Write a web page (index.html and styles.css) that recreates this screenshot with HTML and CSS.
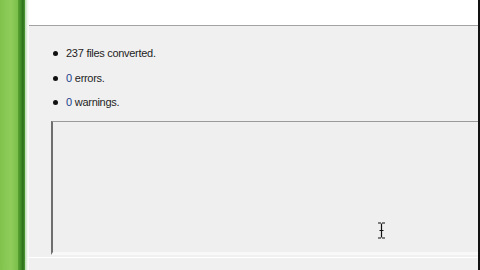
FILE: index.html
```html
<!DOCTYPE html>
<html>
<head>
<meta charset="utf-8">
<link rel="stylesheet" href="styles.css">
</head>
<body>
<div class="screen">
  <div class="desktop">
    <div class="glow"></div>
    <div class="edge-dark"></div>
    <div class="edge-light"></div>
  </div>
  <div class="window">
    <div class="header"></div>
    <div class="content">
      <ul class="results">
        <li><span class="num black">237</span> files converted.</li>
        <li><span class="num">0</span> errors.</li>
        <li><span class="num">0</span> warnings.</li>
      </ul>
      <div class="log">
        <div class="cursor">
          <svg width="9" height="17" viewBox="0 0 9 17"><path d="M1 1H4M5 1H8M4.5 1.5V15.5M1 16H4M5 16H8M2.5 8.5H6.5" stroke="#111" stroke-width="1.2" fill="none"/></svg>
        </div>
      </div>
      <div class="footer-line"></div>
    </div>
  </div>
</div>
</body>
</html>
```

FILE: styles.css
```css
html, body {
  margin: 0;
  padding: 0;
  width: 480px;
  height: 270px;
  overflow: hidden;
  background: #f0f0f0;
}
.screen {
  display: flex;
  width: 480px;
  height: 270px;
}
.desktop {
  width: 29px;
  flex: none;
  display: flex;
  background: linear-gradient(180deg, #7dc24a 0%, #84c84e 40%, #8fcf55 65%, #74bb42 100%);
}
.glow {
  width: 18px;
  background: linear-gradient(90deg, #80c24c 0%, #90cd5c 60%, #7cbf4a 100%);
}
.edge-dark {
  width: 7px;
  background: linear-gradient(90deg, #5aa334 0%, #3f8a25 45%, #2a6e1a 70%, #4f9a35 100%);
}
.edge-light {
  width: 4px;
  background: linear-gradient(90deg, #b8dcb0 0%, #eef5ec 60%, #ffffff 100%);
}
.window {
  flex: 1;
  display: flex;
  flex-direction: column;
  border-right: 2px solid #111;
  background: #f0f0f0;
}
.header {
  height: 25px;
  flex: none;
  background: #ffffff;
  border-bottom: 1px solid #a3a3a3;
}
.content {
  flex: 1;
  display: flex;
  flex-direction: column;
  padding: 21px 0 0 22px;
  font-family: "Liberation Sans", Arial, sans-serif;
  font-size: 11px;
  letter-spacing: -0.3px;
  color: #1e1e1e;
}
.results {
  list-style: none;
  margin: 0;
  padding: 0;
  display: flex;
  flex-direction: column;
  gap: 11px;
}
.results li {
  display: flex;
  align-items: center;
  height: 13.5px;
  line-height: 13.5px;
}
.results li::before {
  content: "";
  width: 5px;
  height: 5px;
  border-radius: 50%;
  background: #111;
  margin: 0 8px 0 2px;
  flex: none;
}
.num {
  color: #1a3f8c;
  margin-right: 3px;
}
.num.black {
  color: #1e1e1e;
}
.log {
  box-sizing: border-box;
  margin-top: 11px;
  height: 134px;
  flex: none;
  border-left: 2px solid #6e6e6e;
  border-top: 1px solid #9a9a9a;
  border-bottom: 3px solid #f8f8f8;
  background: #efefef;
  display: flex;
  justify-content: flex-end;
  align-items: flex-end;
  padding: 0 92px 13px 0;
}
.cursor {
  width: 9px;
  height: 17px;
  display: flex;
}
.footer-line {
  margin-top: 2px;
  height: 1px;
  background: #ffffff;
  margin-left: -22px;
}
```
